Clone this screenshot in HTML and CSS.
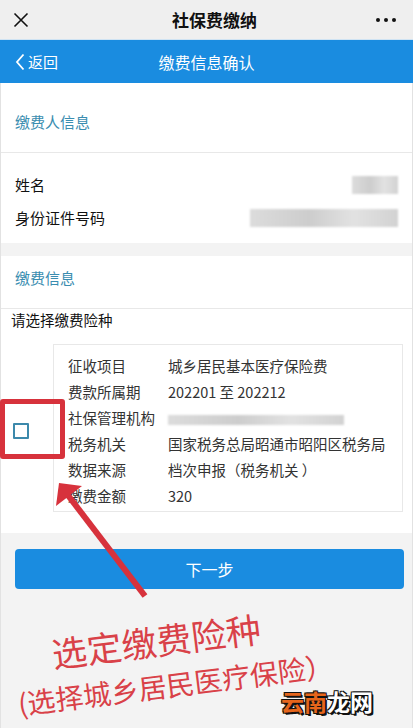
FILE: index.html
```html
<!DOCTYPE html>
<html lang="zh-CN">
<head>
    <meta charset="UTF-8">
    <meta name="viewport" content="width=device-width, initial-scale=1.0">
    <title>社保费缴纳</title>
    <link rel="stylesheet" href="styles.css">
</head>
<body>
    <!-- WeChat style title bar -->
    <div class="topbar">
        <svg class="close-icon" width="16" height="16" viewBox="0 0 16 16">
            <path d="M1.5 1.5 L14.5 14.5 M14.5 1.5 L1.5 14.5" stroke="#111" stroke-width="1.6" fill="none"/>
        </svg>
        <div class="topbar-title">社保费缴纳</div>
        <div class="more-dots"><span></span><span></span><span></span></div>
    </div>
    <div class="navbar">
        <div class="back">
            <svg width="10" height="18" viewBox="0 0 10 18">
                <path d="M8.5 1.5 L2 9 L8.5 16.5" stroke="#fff" stroke-width="1.8" fill="none"/>
            </svg>
            <span>返回</span>
        </div>
        <div class="nav-title">缴费信息确认</div>
    </div>

    <div class="main">
        <div class="section">
            <div class="section-head first">缴费人信息</div>
            <div class="info-rows">
                <div class="info-row">
                    <span>姓名</span>
                    <span class="blur blur-name"></span>
                </div>
                <div class="info-row">
                    <span>身份证件号码</span>
                    <span class="blur blur-id"></span>
                </div>
            </div>
        </div>

        <div class="section">
            <div class="section-head">缴费信息</div>
            <div class="choose-label">请选择缴费险种</div>
            <div class="choose-row">
                <div class="check-col"><span class="checkbox"></span></div>
                <div class="card">
                    <div class="card-row"><span class="k">征收项目</span><span class="v">城乡居民基本医疗保险费</span></div>
                    <div class="card-row"><span class="k">费款所属期</span><span class="v">202201 至 202212</span></div>
                    <div class="card-row"><span class="k">社保管理机构</span><span class="v"><span class="blur blur-org"></span></span></div>
                    <div class="card-row"><span class="k">税务机关</span><span class="v">国家税务总局昭通市昭阳区税务局</span></div>
                    <div class="card-row"><span class="k">数据来源</span><span class="v">档次申报（税务机关 ）</span></div>
                    <div class="card-row"><span class="k">缴费金额</span><span class="v">320</span></div>
                </div>
            </div>
        </div>

        <div class="footer-area">
            <button class="next-button">下一步</button>
        </div>
    </div>

    <!-- annotations drawn over the screenshot -->
    <div class="mark-box"></div>
    <svg class="mark-arrow" width="160" height="130" viewBox="0 470 160 130">
        <line x1="145" y1="596" x2="67" y2="494" stroke="#d7323c" stroke-width="6"/>
        <polygon points="59,483 82,486 56,506" fill="#d7323c"/>
    </svg>
    <div class="note note-1">选定缴费险种</div>
    <div class="note note-2">(选择城乡居民医疗保险）</div>
    <div class="watermark"><span class="wm-orange">云南</span><span class="wm-white">龙网</span></div>
</body>
</html>
```

FILE: styles.css
```css
body {
    margin: 0;
    width: 413px;
    height: 728px;
    overflow: hidden;
    position: relative;
    font-family: "Noto Sans CJK SC", "Noto Sans", sans-serif;
    background-color: #f4f4f4;
    color: #111;
}
/* Title bar */
.topbar {
    height: 39px;
    background-color: #efefef;
    border-bottom: 1px solid #cfe3f3;
    display: flex;
    align-items: center;
    justify-content: space-between;
    padding: 0 17px 0 13px;
}
.close-icon {
    display: block;
}
.topbar-title {
    font-size: 17px;
    font-weight: bold;
    margin-left: 24px;
}
.more-dots {
    display: flex;
    gap: 4px;
}
.more-dots span {
    width: 4px;
    height: 4px;
    border-radius: 50%;
    background-color: #111;
}
.navbar {
    height: 43px;
    background-color: #1a8ce0;
    color: white;
    display: flex;
    align-items: center;
    position: relative;
}
.back {
    display: flex;
    align-items: center;
    gap: 3px;
    padding-left: 15px;
    font-size: 15px;
}
.back svg {
    display: block;
}
.nav-title {
    position: absolute;
    left: 0;
    right: 0;
    text-align: center;
    font-size: 16px;
}
/* Content */
.main {
    border-left: 1px solid #e2e2e2;
    border-right: 1px solid #e2e2e2;
    height: 645px;
    background-color: #f3f3f3;
}
.section {
    background-color: #fff;
}
.section + .section {
    margin-top: 13px;
}
.section-head {
    color: #3a8db0;
    font-size: 15px;
    line-height: 20px;
    padding: 12px 14px 20px;
    border-bottom: 1px solid #e8e8e8;
}
.section-head.first {
    padding-top: 29px;
}
.info-rows {
    padding: 15px 14px 9px;
}
.info-row {
    height: 33px;
    display: flex;
    align-items: center;
    justify-content: space-between;
    font-size: 15px;
}
.blur {
    display: inline-block;
    background: linear-gradient(to right, #dcdcdc, #cdcdcd 40%, #e2e2e2 70%, #d2d2d2);
    filter: blur(1px);
}
.blur-name {
    width: 46px;
    height: 18px;
}
.blur-id {
    width: 148px;
    height: 18px;
}
.blur-org {
    width: 176px;
    height: 10px;
    vertical-align: middle;
}
.choose-label {
    font-size: 14.5px;
    line-height: 20px;
    padding: 1px 10px 0;
}
.choose-row {
    display: flex;
    align-items: center;
    padding: 14px 9px 21px 0;
}
.check-col {
    width: 52px;
    display: flex;
    padding-left: 12px;
    box-sizing: border-box;
}
.checkbox {
    width: 12px;
    height: 12px;
    border: 2px solid #3c89ab;
    border-radius: 1px;
    margin-top: 5px;
}
.card {
    flex: 1;
    border: 1px solid #e8e8e8;
    padding: 7px 0 3px 14px;
}
.card-row {
    height: 26px;
    display: flex;
    align-items: center;
    font-size: 14.5px;
    color: #333;
}
.card-row .k {
    width: 100px;
    flex-shrink: 0;
}
.footer-area {
    padding: 16px 8px 0 14px;
}
.next-button {
    width: 100%;
    height: 40px;
    border: none;
    border-radius: 4px;
    background-color: #1a8ce0;
    color: white;
    font-family: inherit;
    font-size: 16px;
}
/* Red annotations over the screenshot */
.mark-box {
    position: absolute;
    left: 0;
    top: 399px;
    width: 55px;
    height: 50px;
    border: 5px solid #d7323c;
    border-radius: 3px;
}
.mark-arrow {
    position: absolute;
    left: 0;
    top: 470px;
}
.note {
    position: absolute;
    color: #d94148;
    white-space: nowrap;
    transform-origin: left center;
    transform: rotate(-7deg);
}
.note-1 {
    left: 52px;
    top: 632px;
    font-size: 35px;
    line-height: 42px;
}
.note-2 {
    left: 18px;
    top: 686px;
    font-size: 28px;
    line-height: 34px;
}
.watermark {
    position: absolute;
    left: 281px;
    top: 687px;
    font-size: 23px;
    font-weight: bold;
    line-height: 28px;
}
.wm-orange {
    color: #e6651b;
    text-shadow: -1px -1px 0 #111, 1px -1px 0 #111, -1px 1px 0 #111, 1px 1px 0 #111, 2px 2px 0 #111;
}
.wm-white {
    color: #fff;
    text-shadow: -1px -1px 0 #111, 1px -1px 0 #111, -1px 1px 0 #111, 1px 1px 0 #111, 2px 2px 0 #111;
}
```
